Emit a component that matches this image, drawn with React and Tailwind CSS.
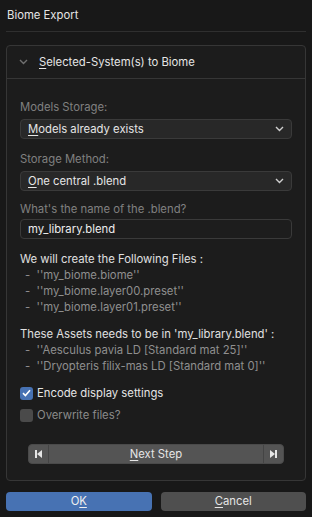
import React from "react";

const Chevron = ({ className = "" }) => (
  <svg width="9" height="6" viewBox="0 0 9 6" className={className}>
    <path d="M1 1 L4.5 4.5 L8 1" fill="none" stroke="currentColor" strokeWidth="1.4" />
  </svg>
);

const Dropdown = ({ first, rest }) => (
  <div className="h-[20px] rounded-[4px] bg-[#282828] border border-[#3a3a3a] flex items-center pl-[7px] pr-[7px] text-[#e5e5e5]">
    <span className="flex-1"><span className="underline underline-offset-2">{first}</span>{rest}</span>
    <Chevron className="text-[#cfcfcf]" />
  </div>
);

const Item = ({ children }) => (
  <div className="h-[16px] leading-[16px] text-[#8f8f8f] pl-[5px]">-&nbsp;&nbsp;''{children}''</div>
);

export default function App() {
  return (
    <div
      className="w-[312px] h-[517px] bg-[#181818] text-[11.3px] text-[#e5e5e5] overflow-hidden"
      style={{ fontFamily: "Inter, 'Noto Sans', sans-serif" }}
    >
      <div className="h-[31px] flex items-center px-[7px]">Biome Export</div>
      <div className="mx-[6px] h-px bg-[#2f2f2f]" />
      <div className="mx-[6px] mt-[13px] h-[436px] rounded-[4px] border border-[#363636] bg-[#1c1c1c] flex flex-col">
        <div className="h-[33px] border-b border-[#363636] flex items-center">
          <Chevron className="ml-[12px] text-[#707070]" />
          <span className="ml-[11px]"><span className="underline underline-offset-2">S</span>elected-System(s) to Biome</span>
        </div>
        <div className="px-[13px] pt-[20px] flex flex-col">
          <div className="h-[16px] leading-[16px] text-[#808080]">Models Storage:</div>
          <div className="mt-[4px]"><Dropdown first="M" rest="odels already exists" /></div>
          <div className="mt-[12px] h-[16px] leading-[16px] text-[#808080]">Storage Method:</div>
          <div className="mt-[4px]"><Dropdown first="O" rest="ne central .blend" /></div>
          <div className="mt-[10px] h-[16px] leading-[16px] text-[#808080]">What's the name of the .blend?</div>
          <div className="mt-[2px] h-[20px] rounded-[4px] bg-[#1d1d1d] border border-[#3a3a3a] flex items-center pl-[7px] text-[#ededed]">my_library.blend</div>
          <div className="mt-[12px] h-[16px] leading-[16px] text-[#e0e0e0]">We will create the Following Files :</div>
          <Item>my_biome.biome</Item>
          <Item>my_biome.layer00.preset</Item>
          <Item>my_biome.layer01.preset</Item>
          <div className="mt-[11px] h-[16px] leading-[16px] text-[#e0e0e0]">These Assets needs to be in 'my_library.blend' :</div>
          <Item>Aesculus pavia LD [Standard mat 25]</Item>
          <Item>Dryopteris filix-mas LD [Standard mat 0]</Item>
          <div className="mt-[11px] h-[16px] flex items-center">
            <div className="w-[13px] h-[13px] rounded-[3px] bg-[#4772b3] flex items-center justify-center">
              <svg width="9" height="8" viewBox="0 0 9 8"><path d="M1 4.2 L3.4 6.5 L8 1.2" fill="none" stroke="#ffffff" strokeWidth="1.6" /></svg>
            </div>
            <span className="ml-[4px] text-[#e5e5e5]">Encode display settings</span>
          </div>
          <div className="mt-[6px] h-[16px] flex items-center">
            <div className="w-[13px] h-[13px] rounded-[3px] bg-[#4a4a4a]" />
            <span className="ml-[4px] text-[#8a8a8a]">Overwrite files?</span>
          </div>
          <div className="mt-[21px] mx-[8px] h-[20px] rounded-[4px] bg-[#545454] border border-[#4a4a4a] flex">
            <div className="w-[20px] flex items-center justify-center border-r border-[#444444]">
              <svg width="9" height="10" viewBox="0 0 9 10"><rect x="1" y="1" width="2" height="8" fill="#e6e6e6" /><path d="M8 1 L3 5 L8 9 Z" fill="#e6e6e6" /></svg>
            </div>
            <div className="flex-1 flex items-center justify-center text-[#e5e5e5]"><span><span className="underline underline-offset-2">N</span>ext Step</span></div>
            <div className="w-[20px] flex items-center justify-center border-l border-[#444444]">
              <svg width="9" height="10" viewBox="0 0 9 10"><path d="M1 1 L6 5 L1 9 Z" fill="#e6e6e6" /><rect x="6" y="1" width="2" height="8" fill="#e6e6e6" /></svg>
            </div>
          </div>
        </div>
      </div>
      <div className="mx-[6px] mt-[11px] flex gap-[9px]">
        <div className="flex-1 h-[19px] rounded-[4px] bg-[#4772b3] flex items-center justify-center text-[#f0f0f0]"><span>O<span className="underline underline-offset-2">K</span></span></div>
        <div className="flex-1 h-[19px] rounded-[4px] bg-[#4f4f4f] flex items-center justify-center text-[#e5e5e5]"><span><span className="underline underline-offset-2">C</span>ancel</span></div>
      </div>
    </div>
  );
}
